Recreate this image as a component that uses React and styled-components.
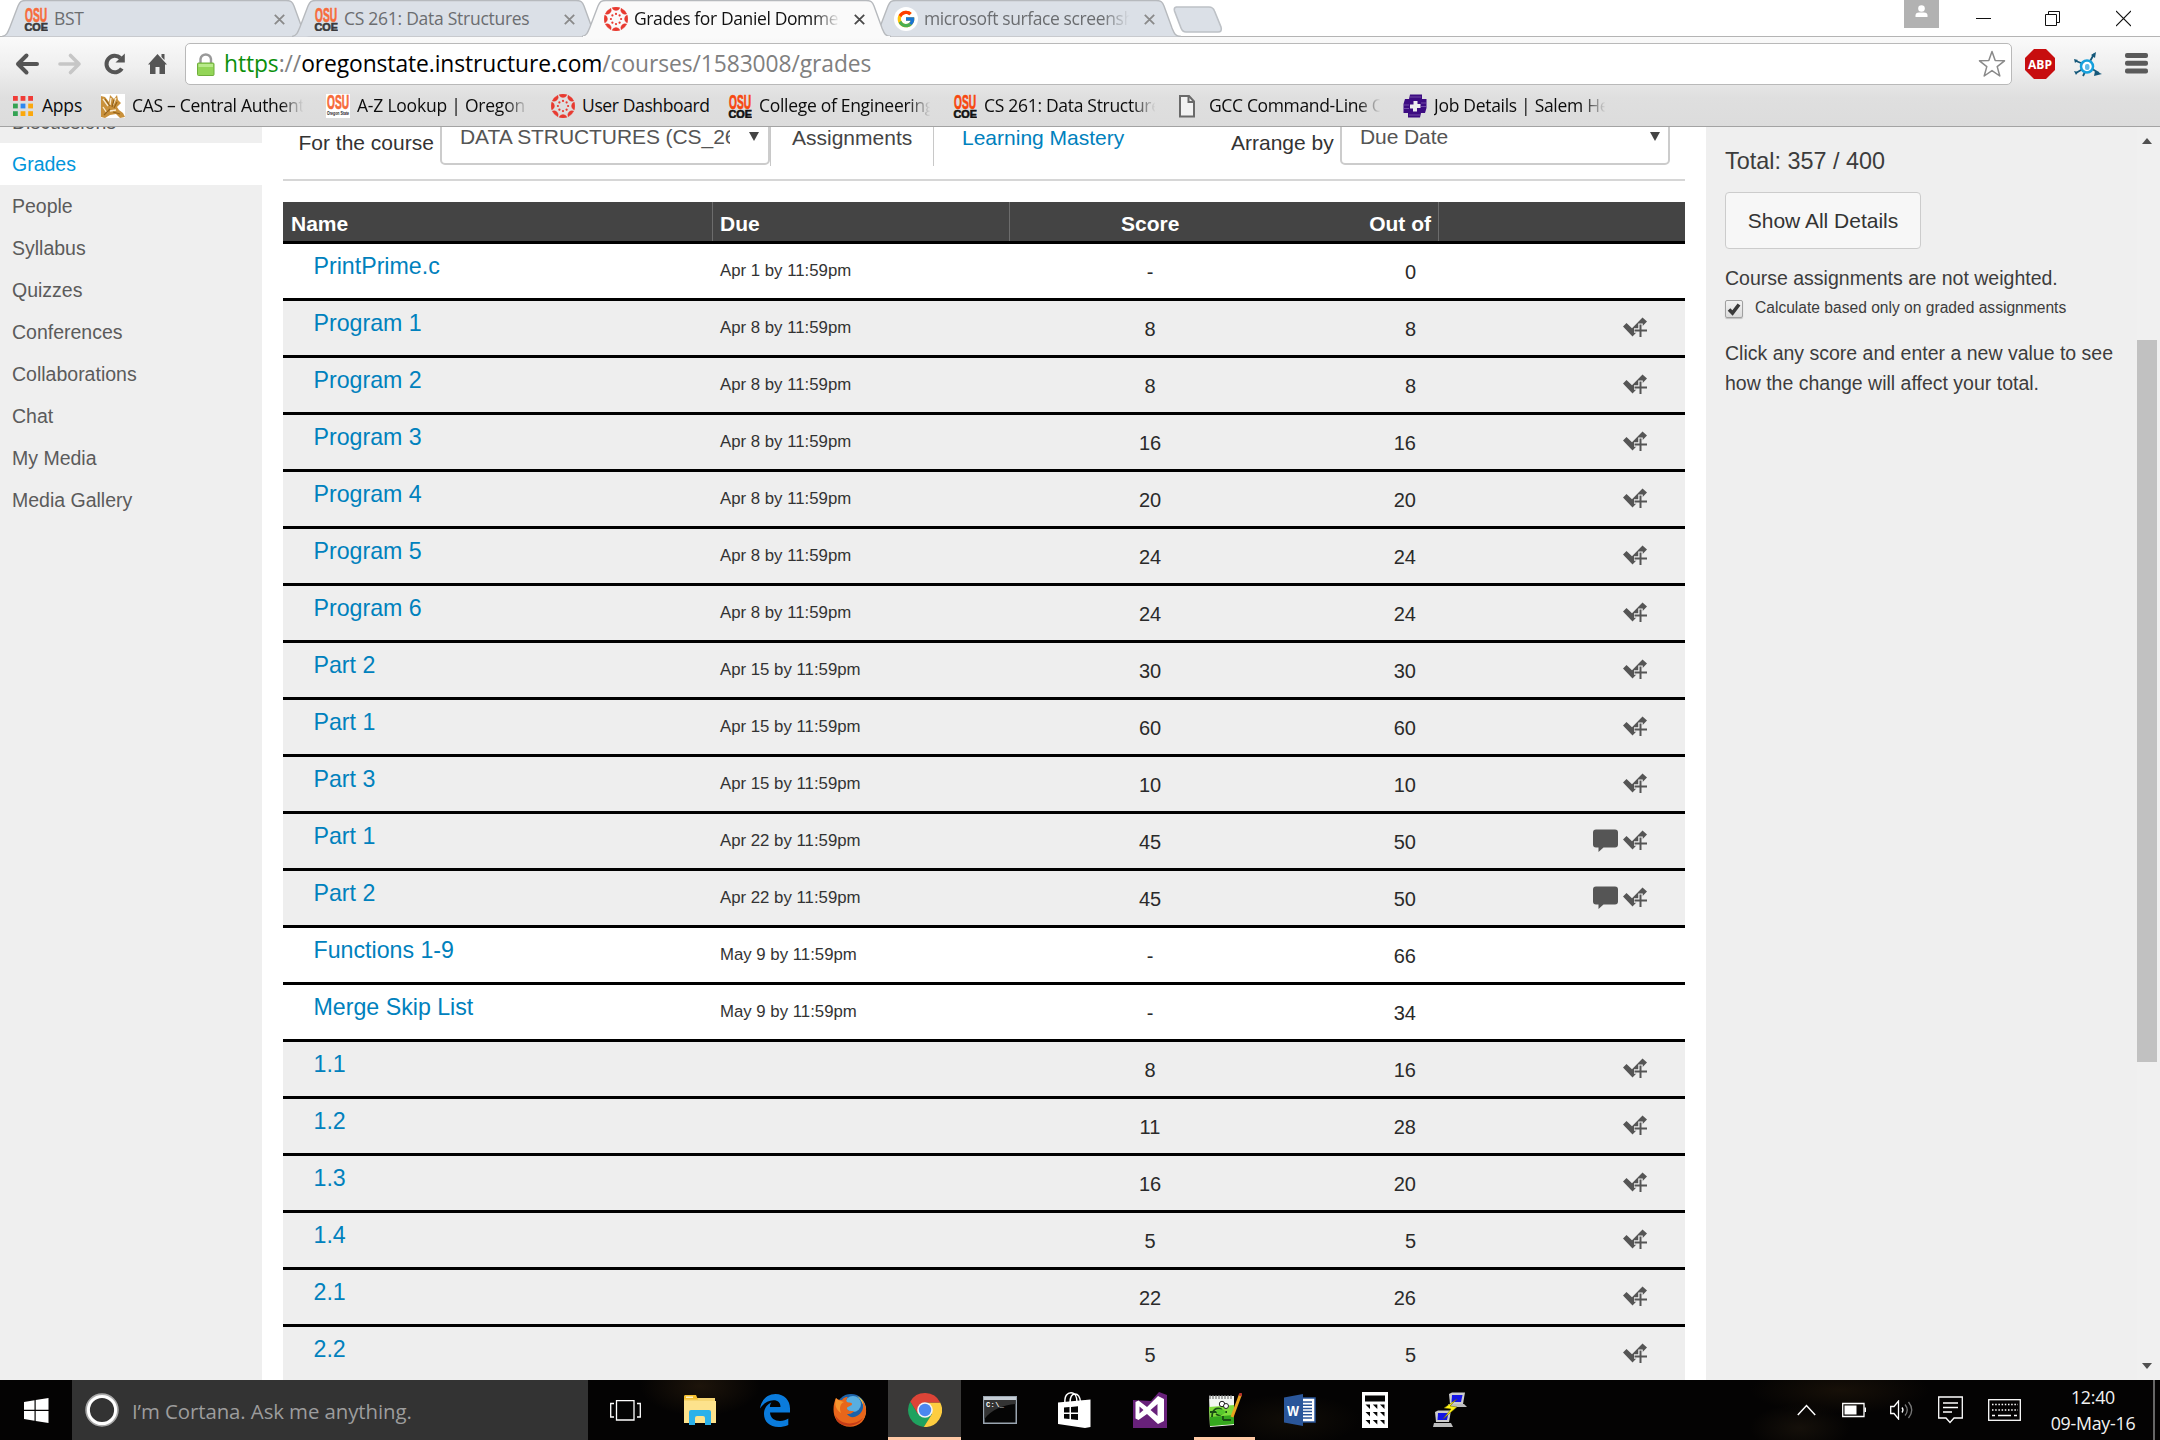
import React from "react";
import styled, { createGlobalStyle, css } from "styled-components";
import { FcGoogle } from "react-icons/fc";

const ui = `"Open Sans", "Noto Sans", sans-serif`;
const web = `"Liberation Sans", Arial, sans-serif`;

const Global = createGlobalStyle`
  * { box-sizing: border-box; }
  html, body { margin: 0; padding: 0; }
  body { width: 2160px; height: 1440px; overflow: hidden; background: #fff; font-family: ${web}; }
  svg { display: block; flex: none; }
`;

const Screen = styled.div`
  width: 2160px;
  height: 1440px;
  display: flex;
  flex-direction: column;
  overflow: hidden;
`;

/* ---------- browser window ---------- */
const TabStrip = styled.div`
  height: 36px;
  flex: none;
  display: flex;
  justify-content: space-between;
  background: #fff;
  font-family: ${ui};
`;
const Tabs = styled.div`
  display: flex;
  padding-left: 2px;
`;
const TabBox = styled.div`
  position: relative;
  z-index: ${(p) => (p.$active ? 3 : 1)};
  width: 290px;
  height: 36px;
  display: flex;
  align-items: center;
  padding: 2px 0 0 22px;
  color: ${(p) => (p.$active ? "#111" : "#6b6d70")};
`;
const TabShape = styled.svg`
  position: absolute;
  left: 0;
  top: 0;
  z-index: -1;
`;
const TabTitle = styled.span`
  width: 208px;
  margin-left: 6px;
  margin-right: 12px;
  margin-top: -2px;
  overflow: hidden;
  white-space: nowrap;
  font-size: 17.5px;
  line-height: 24px;
  letter-spacing: ${(p) => p.$ls || 0}px;
  ${(p) => p.$fade && css`mask-image: linear-gradient(to right, #000 86%, transparent 99%);`}
`;
const NewTab = styled.svg`
  margin: 6px 0 0 11px;
`;
const WindowControls = styled.div`
  display: flex;
  align-items: flex-start;
`;
const Profile = styled.div`
  width: 35px;
  height: 28px;
  margin-right: 37px;
  background: #b2b2b2;
  display: flex;
  justify-content: center;
  padding-top: 5px;
`;
const ControlIcon = styled.svg`
  margin-top: 10px;
  margin-right: ${(p) => p.$gap}px;
`;

const Chrome = styled.div`
  height: 91px;
  flex: none;
  border-top: 1px solid #b4b4b4;
  border-bottom: 1px solid #a3a3a3;
  background: linear-gradient(#fafafa 0, #efefef 30px, #dfdfdf 60px, #dcdcdc 100%);
  font-family: ${ui};
`;
const Toolbar = styled.div`
  height: 48px;
  margin-top: 0;
  padding: 6px 10px 0 14px;
  display: flex;
  align-items: flex-start;
`;
const NavIcon = styled.svg`
  margin-top: 8px;
  margin-right: ${(p) => p.$gap}px;
`;
const Omnibox = styled.div`
  width: 1827px;
  height: 42px;
  border: 1px solid #b9b9b9;
  border-radius: 5px;
  background: #fff;
  display: flex;
  align-items: center;
  padding: 0 5px 0 8px;
`;
const Url = styled.div`
  flex: 1;
  margin-left: 7px;
  font-size: 22.8px;
  line-height: 36px;
  letter-spacing: ${(p) => p.$ls || 0}px;
  color: #808080;
  white-space: nowrap;
`;
const Secure = styled.span` color: #0b8f0b; `;
const Host = styled.span` color: #000; `;
const Ext = styled.svg`
  margin-left: ${(p) => p.$gap}px;
  margin-top: ${(p) => p.$top}px;
`;

const Bookmarks = styled.div`
  height: 41px;
  padding: 0 0 0 13px;
  display: flex;
  align-items: center;
  gap: 19px;
`;
const Bookmark = styled.div`
  display: flex;
  align-items: center;
  gap: ${(p) => p.$gap || 7}px;
`;
const BookmarkText = styled.span`
  width: ${(p) => p.$w}px;
  margin-top: -2px;
  overflow: hidden;
  white-space: nowrap;
  font-size: 17.5px;
  line-height: 26px;
  letter-spacing: ${(p) => p.$ls || 0}px;
  color: #0c0c0c;
  ${(p) => p.$fade && css`mask-image: linear-gradient(to right, #000 85%, transparent 98%);`}
`;

/* ---------- page ---------- */
const Page = styled.div`
  height: 1253px;
  flex: none;
  display: flex;
  overflow: hidden;
  color: #333;
`;
const CourseNav = styled.nav`
  width: 262px;
  height: 1300px;
  margin-top: -26px;
  background: #efefef;
`;
const NavItem = styled.div`
  height: 42px;
  padding-left: 12px;
  font-size: 19.5px;
  line-height: 42px;
  color: ${(p) => (p.$active ? "#0096db" : "#5b5b5b")};
  background: ${(p) => (p.$active ? "#fff" : "transparent")};
`;
const Main = styled.main`
  width: 1444px;
  padding: 0 21px 0 21px;
`;
const Filters = styled.div`
  height: 54px;
  border-bottom: 2px solid #d6d6d6;
  display: flex;
  align-items: flex-start;
  font-size: 21px;
  line-height: 32px;
  white-space: nowrap;
`;
const FilterLabel = styled.span`
  width: ${(p) => p.$w}px;
  padding-left: ${(p) => p.$pad}px;
  padding-top: 0;
`;
const Select = styled.div`
  width: ${(p) => p.$w}px;
  height: 60px;
  margin-top: -22px;
  padding: 14px 0 0 18px;
  border: 2px solid #ccc;
  border-radius: 5px;
  color: #555;
  display: flex;
`;
const SelectText = styled.span`
  width: ${(p) => p.$w}px;
  overflow: hidden;
  letter-spacing: -0.08px;
`;
const SelectArrow = styled.span`
  width: 0;
  height: 0;
  margin: 11px 0 0 ${(p) => p.$gap}px;
  border: 5px solid transparent;
  border-top: 9px solid #444;
  border-bottom: 0;
`;
const ViewTab = styled.span`
  width: ${(p) => p.$w}px;
  height: 39px;
  padding-left: ${(p) => p.$pad}px;
  line-height: 21px;
  border-left: 1px solid #c8c8c8;
  color: ${(p) => (p.$link ? "#0081bd" : "#444")};
`;

const columns = "430px 297px 429px 246px";
const HeaderRow = styled.div`
  margin-top: 21px;
  height: 42px;
  display: grid;
  grid-template-columns: ${columns};
  background: #444;
  border-bottom: 3px solid #000;
  color: #fff;
  font-size: 21px;
  font-weight: bold;
  line-height: 41px;
`;
const HeadCell = styled.div`
  padding: 1px 7px 0 8px;
  display: ${(p) => (p.$split ? "flex" : "block")};
  justify-content: space-between;
  border-right: ${(p) => (p.$last ? "0" : "1px solid #6c6c6c")};
  height: 39px;
`;
const DueHead = styled.span` margin-left: -1px; `;
const ScoreHead = styled.span` margin-left: 103px; `;
const Row = styled.div`
  height: 57px;
  display: grid;
  grid-template-columns: ${columns};
  border-bottom: 3px solid #000;
  background: ${(p) => (p.$graded ? "#eee" : "#fff")};
`;
const NameCell = styled.div`
  padding-left: 30.5px;
  font-size: 23.2px;
  line-height: 44px;
  color: #0081bd;
`;
const DueCell = styled.div`
  padding-left: 7px;
  font-size: 16.8px;
  line-height: 54px;
  height: 54px;
`;
const ScoreCell = styled.div`
  height: 54px;
  display: flex;
  justify-content: space-between;
  padding: 0 23px 0 0;
  font-size: 20px;
  line-height: 56px;
  color: #2a2a2a;
`;
const Earned = styled.span`
  width: 280px;
  text-align: center;
`;
const IconCell = styled.div`
  display: flex;
  justify-content: flex-end;
  gap: 5px;
  padding: 15px 38px 0 0;
`;

const Aside = styled.aside`
  width: 431px;
  padding: 14px 0 0 19px;
  background: #efefef;
  color: #3c3c3c;
  font-size: 19.5px;
`;
const Total = styled.div`
  font-size: 23.4px;
  line-height: 40px;
`;
const DetailsButton = styled.button`
  display: block;
  width: 196px;
  height: 57px;
  margin: 11px 0 0;
  padding: 0;
  border: 1px solid #ccc;
  border-radius: 4px;
  background: #f7f7f7;
  color: #333;
  font: 21px ${web};
`;
const Para = styled.p`
  margin: ${(p) => p.$top}px 0 0;
  line-height: 30px;
  white-space: nowrap;
`;
const CheckRow = styled.div`
  display: flex;
  align-items: center;
  height: 26px;
  margin-top: 2px;
  font-size: 15.6px;
  white-space: nowrap;
`;
const CheckBox = styled.span`
  width: 18px;
  height: 18px;
  margin: 2px 12px 0 0;
  border: 1px solid #a0a0a0;
  border-radius: 2px;
  background: linear-gradient(#f2f2f2, #dcdcdc);
  box-shadow: 0 1px 1px rgba(0, 0, 0, 0.2);
`;
const ScrollBar = styled.div`
  width: 23px;
  background: #f0f0f0;
  display: flex;
  flex-direction: column;
  align-items: flex-start;
  padding: 11px 0;
`;
const ScrollArrow = styled.svg`
  margin-left: ${(p) => p.$x}px;
  margin-top: ${(p) => p.$top}px;
`;
const ScrollThumb = styled.div`
  width: 20px;
  height: 722px;
  margin-top: 196px;
  background: #c1c1c1;
`;

/* ---------- taskbar ---------- */
const Taskbar = styled.div`
  height: 60px;
  flex: none;
  display: flex;
  background:
    radial-gradient(ellipse 60px 30px at 700px 6px, #1d140a, transparent),
    radial-gradient(ellipse 90px 24px at 1840px 10px, #171008, transparent),
    radial-gradient(ellipse 70px 26px at 1290px 40px, #110d07, transparent),
    radial-gradient(ellipse 50px 24px at 1800px 48px, #15100a, transparent),
    #040303;
  font-family: ${ui};
`;
const StartButton = styled.div`
  width: 72px;
  display: flex;
  align-items: center;
  padding-left: 24px;
`;
const Cortana = styled.div`
  width: 516px;
  background: #333;
  display: flex;
  align-items: center;
  padding-left: 13px;
  color: #9d9d9d;
  font-size: 20.4px;
  letter-spacing: ${(p) => p.$ls}px;
`;
const CortanaText = styled.span`
  margin-left: 13px;
  padding-top: 1px;
`;
const TaskView = styled.div`
  width: 74px;
  display: flex;
  align-items: center;
  justify-content: center;
`;
const Apps = styled.div`
  display: flex;
`;
const AppSlot = styled.div`
  width: 75px;
  display: flex;
  justify-content: center;
`;
const AppButton = styled.div`
  width: ${(p) => (p.$active ? 73 : 61)}px;
  height: 60px;
  display: flex;
  align-items: center;
  justify-content: center;
  padding-top: 3px;
  background: ${(p) => (p.$active ? "#3a3938" : "transparent")};
  border-bottom: 3px solid ${(p) => (p.$running || p.$active ? "#ffc9a5" : "transparent")};
`;
const Tray = styled.div`
  flex: 1;
  display: flex;
  align-items: center;
  justify-content: flex-end;
`;
const TrayIcon = styled.svg`
  margin-right: ${(p) => p.$gap}px;
`;
const Clock = styled.div`
  width: 92px;
  margin-right: 14px;
  text-align: center;
  color: #f2f2f2;
  font-size: 17.8px;
  line-height: 26px;
  letter-spacing: ${(p) => p.$ls}px;
  white-space: nowrap;
`;
const PeekEdge = styled.div`
  width: 7px;
  height: 60px;
  border-left: 2px solid #666;
`;

/* ---------- icons ---------- */
const OsuIcon = ({ dim, variant }) => (
  <svg width="24" height="24" viewBox="0 0 24 24" fontFamily={web} fontWeight="bold">
    {variant === "state" && <rect width="24" height="24" fill="#fff" />}
    <text x="1" y="14.5" fontSize="20" textLength="22" lengthAdjust="spacingAndGlyphs" fill={dim || variant ? "#f76b3a" : "#f8470e"} stroke={dim || variant ? "#f76b3a" : "#f8470e"} strokeWidth="0.7">OSU</text>
    {variant === "state" ? (
      <text x="1" y="21" fontSize="5" textLength="22" lengthAdjust="spacingAndGlyphs" fill="#222">Oregon State</text>
    ) : (
      <text x="0.5" y="23.8" fontSize="11" textLength="23.5" lengthAdjust="spacingAndGlyphs" fill={dim ? "#3a3a3c" : "#111"} stroke={dim ? "#3a3a3c" : "#111"} strokeWidth="0.6">COE</text>
    )}
  </svg>
);

const CanvasIcon = () => (
  <svg width="24" height="24" viewBox="-12 -12 24 24" fill="#e83a30">
    {[0, 45, 90, 135, 180, 225, 270, 315].map((a) => (
      <g key={a} transform={`rotate(${a})`}>
        <path d="M-4 -11.2 A12 12 0 0 1 4 -11.2 A4.300 4.300 0 0 1 -4 -11.2Z" stroke="#e83a30" strokeWidth="0.4" />
        <circle cy="-5.1" r="1.1" />
      </g>
    ))}
  </svg>
);

const GoogleIcon = () => (
  <svg width="24" height="24" viewBox="0 0 24 24">
    <circle cx="12" cy="12" r="12" fill="#fff" />
    <FcGoogle x="2" y="2" width="20" height="20" size={20} />
  </svg>
);

const AppsGrid = () => (
  <svg width="20" height="20" viewBox="0 0 20 20">
    {["#f03c37", "#f03c37", "#f03c37", "#34a353", "#2d87f0", "#fba80d", "#34a353", "#fba80d", "#fba80d"].map((c, i) => (
      <rect key={i} x={(i % 3) * 7.6} y={Math.floor(i / 3) * 7.6} width="4.8" height="4.8" fill={c} />
    ))}
  </svg>
);

const BeaverIcon = () => (
  <svg width="24" height="24" viewBox="0 0 24 24">
    <rect width="24" height="24" fill="#fff" />
    <path d="M0 2 L4 3 L8 8 L9 1 L13 5 L16 1 L17 6 L20 9 L16 13 L18 16 L22 19 L24 23 L19 24 L15 20 L9 21 L4 24 L0 23Z" fill="#c9913c" />
    <path d="M2 5 L7 12 M10 4 L9 11 M15 4 L12 11 M2 13 L6 19 M9 17 L15 16" stroke="#f8ead0" strokeWidth="1.300" fill="none" />
    <path d="M4 5 L9 12 M13 6 L11 13 M3 21 L9 15 M16 8 L13 14 M12 18 L19 20" stroke="#94621a" strokeWidth="1.200" fill="none" />
  </svg>
);

const FileIcon = () => (
  <svg width="18" height="24" viewBox="0 0 18 24" fill="none" stroke="#6a6a6a" strokeWidth="2">
    <path d="M2 2 H11 L16 7.5 V22.5 H2 Z" fill="#f2f2f2" />
    <path d="M10.5 2 V8 H16" />
  </svg>
);

const SalemIcon = () => (
  <svg width="24" height="24" viewBox="0 0 24 24">
    <path d="M7 0.500 H19 V5 H23.500 V14 L22 19 H18 L17 23.500 H5 V19 H0.500 V10 L2 5 H6Z" fill="#3d0c82" />
    <path d="M10.500 7 H14.500 V10 H17.500 V14 H14 V17.500 H10 V14.500 H7 V10.500 H10.500Z" fill="#eee" />
    <path d="M1 11 H6 M1 14.500 H6 M7 3 H18 M6 21 H17 M18 9 H23 M18 12.500 H23" stroke="#8a68b8" strokeWidth="0.700" />
  </svg>
);

const CheckPlus = () => (
  <svg width="24" height="24" viewBox="0 0 24 24">
    <path d="M0 10.5 L3.5 7 L9 12.2 L19.5 1.5 L24 5.5 L9.5 20.5Z" fill="#555" />
    <path d="M17.5 7.5 V21.5 M11 14.6 H24" stroke="#eee" strokeWidth="4.500" />
    <path d="M17.5 8.5 V21 M11.5 14.6 H24" stroke="#555" strokeWidth="2" />
  </svg>
);

const Bubble = () => (
  <svg width="25" height="24" viewBox="0 0 25 24">
    <path d="M3 0.5 H22 A3 3 0 0 1 25 3.5 V15.5 A3 3 0 0 1 22 18.5 H10.5 L5.5 23 V18.5 H3 A3 3 0 0 1 0 15.5 V3.5 A3 3 0 0 1 3 0.5Z" fill="#555" />
  </svg>
);

const CloseX = ({ active }) => (
  <svg width="11" height="11" viewBox="0 0 11 11" stroke={active ? "#4a4a4a" : "#8a8a8a"} strokeWidth="1.8">
    <path d="M0.8 0.8 L10.2 10.2 M10.2 0.8 L0.8 10.2" />
  </svg>
);

const Tab = ({ icon, title, active, fade, ls }) => (
  <TabBox $active={active}>
    <TabShape width="312" height="37" viewBox="0 0 312 37">
      <path
        d="M0 36.5 C5 35.5 6 32 8 27 L16 6 C18 1.5 19 0.5 24 0.5 H284 C289 0.5 290.5 2 292 6 L300 28 C302.5 34 303 36 309 36.5"
        fill={active ? "#fafafa" : "#dbe0e7"}
        stroke="#b6b9bd"
        strokeWidth="1.4"
      />
      {active && <path d="M1 36.8 H308" stroke="#fafafa" strokeWidth="1.6" />}
    </TabShape>
    {icon}
    <TabTitle $fade={fade} $ls={ls}>{title}</TabTitle>
    <CloseX active={active} />
  </TabBox>
);

const FolderApp = () => (
  <svg width="36" height="30" viewBox="0 0 36 30">
    <path d="M2 2 Q2 0 4 0 H13 L15 3 H33 V28 H2Z" fill="#f6d673" />
    <path d="M2 2 Q2 0 4 0 H14 L16 4.5 H2Z" fill="#f5bf2e" />
    <rect x="4" y="1.5" width="7" height="1.5" fill="#fff3c4" />
    <path d="M2 6 H34 V28 H2Z" fill="#fde28c" />
    <path d="M7 30 V17 Q7 15 9 15 H27 Q29 15 29 17 V30 H23 V23 Q23 21 21 21 H15 Q13 21 13 23 V30Z" fill="#2bb1ea" />
  </svg>
);
const EdgeApp = () => (
  <svg width="30" height="33" viewBox="0 0 30 33">
    <path d="M0 14.5 C1.5 5 8 0 15.5 0 C24.5 0 30 6.5 30 14.5 V18.6 H10 C10.3 24.5 15 27 20 27 C23.5 27 26 26 28.3 24.6 V31 C25 32.5 21.8 33 18.5 33 C9.5 33 4 27.5 4 20 C4 14.5 7 10.5 11.5 8.3 C10.5 9.7 10 11 9.9 13 H20.5 C20.5 8.5 18 6.2 13.5 6.2 C8 6.2 3.5 9.3 0 14.5Z" fill="#0a7bdc" />
  </svg>
);
const FirefoxApp = () => (
  <svg width="34" height="34" viewBox="0 0 34 34">
    <circle cx="18" cy="16" r="15" fill="#1d62a8" />
    <circle cx="20" cy="11" r="8" fill="#58aee0" />
    <path d="M24 3 C34 8 35 20 30 27 C33 16 30 8 24 3Z" fill="#fbd44a" />
    <path d="M3 5 C5 7 7 7 9 7 C11 4 13 4 15 4 C13 6 13 8 14 9 C16 10 19 9 19 11 C19 13 15 13 14 15 C14 18 17 18 21 18 C19 21 16 21 14 21 C17 26 25 25 29 18 C31 14 30 10 29 7 C35 14 34 23 29 29 C22 36 10 35 4 28 C-1 21 0 11 3 5Z" fill="#e8661b" />
    <path d="M2 22 C7 31 20 34 30 25 C27 32 12 37 4 28Z" fill="#c63d17" />
    <path d="M3 5 C5 8 9 8 11 9 C7 11 6 15 8 20 C3 17 1 11 3 5Z" fill="#f6952e" />
  </svg>
);
const ChromeApp = () => (
  <svg width="34" height="34" viewBox="-17 -17 34 34">
    <path d="M-14.7 -8.5 A17 17 0 0 0 -1 17 L7 4 L0 0 L-7 4Z" fill="#1fa25f" />
    <path d="M15.2 -7.6 A17 17 0 0 1 -1.2 17 L7 4 L3 -7.6Z" fill="#fdcd40" />
    <path d="M-14.7 -8.5 A17 17 0 0 1 15.2 -7.6 H0 L-7 4Z" fill="#dc4437" />
    <circle r="7.8" fill="#f4f4f4" />
    <circle r="6.2" fill="#4a87f0" />
  </svg>
);
const CmdApp = () => (
  <svg width="34" height="28" viewBox="0 0 34 28">
    <rect x="0.75" y="0.75" width="32.5" height="26.5" fill="#050505" stroke="#9aa5b0" strokeWidth="1.5" />
    <path d="M1.5 4 H32.5 L32.5 8 C20 9 8 14 1.5 23Z" fill="#333" />
    <rect x="1" y="1" width="32" height="3" fill="#c4ccd4" />
    <text x="3" y="11" fontSize="7" fontFamily="Liberation Mono, monospace" fontWeight="bold" fill="#fff" textLength="18">{"C:\\_"}</text>
  </svg>
);
const StoreApp = () => (
  <svg width="33" height="36" viewBox="0 0 33 36">
    <path d="M7 12 C6 3 10 0.8 13 0.8 C17 0.8 19 5 19 10 M12 11 C12 4 14 2 17 2 C20 2 22 5 22.5 10" fill="none" stroke="#fff" strokeWidth="1.5" />
    <path d="M0 10.500 L32.5 7.500 V35 L27 36 L0 32Z" fill="#fff" />
    <path d="M6 15.500 L11.500 15 V20.5 H6Z M13 14.900 L20 14.2 V20.5 H13Z M6 22 H11.500 V27 L6 26.5Z M13 22 H20 V28 L13 27.2Z" fill="#050505" />
  </svg>
);
const VsApp = () => (
  <svg width="34" height="36" viewBox="0 0 34 36">
    <path d="M0 8 L18 9 L26 0 L34 3 V36 H0Z" fill="#68217a" />
    <path d="M2.5 10 L5.5 8.5 L14 15 L25 4 L31 7 V29 L25 32 L14 22 L5.5 28 L2.5 26.5Z M6.5 14.5 V21.5 L10.5 18Z M17.5 18 L24.5 24 V12Z" fill="#fff" fillRule="evenodd" />
  </svg>
);
const NppApp = () => (
  <svg width="34" height="34" viewBox="0 0 34 34">
    <path d="M1 3 L26 3 L26 32 L2 34Z" fill="#f2f5f2" />
    <path d="M1 14 L26 12 V31 L2 33Z" fill="#7fdc3c" />
    <path d="M2 24 L26 22 V31 L2 33Z" fill="#35a81e" />
    <path d="M2 2 V6 M5 2 V6 M8 2 V6 M11 2 V6 M14 2 V6 M17 2 V6 M20 2 V6 M23 2 V6" stroke="#777" strokeWidth="1.2" />
    <path d="M4 24 C4 17 8 14 13 16 C16 20 12 24 8 21 M2 19 H19 M15 27 V23 M15 27 H23" fill="none" stroke="#194d14" strokeWidth="1.8" />
    <path d="M8 18 C11 15 16 16 18 19 C14 23 10 23 8 18Z" fill="#57c92c" />
    <circle cx="14" cy="11" r="2.7" fill="#fff" stroke="#222" />
    <circle cx="18" cy="13" r="2.5" fill="#fff" stroke="#222" />
    <path d="M32.5 1.5 L24 24" stroke="#e9a21d" strokeWidth="3" />
    <path d="M33 0 L32 3" stroke="#b5342b" strokeWidth="3" />
  </svg>
);
const WordApp = () => (
  <svg width="32" height="32" viewBox="0 0 32 32">
    <rect x="15" y="4" width="16" height="24" fill="#fff" stroke="#2a569a" strokeWidth="1.5" />
    <path d="M19 8 H28 M19 11.2 H28 M19 14.4 H28 M19 17.6 H28 M19 20.8 H28 M19 24 H28" stroke="#2a569a" strokeWidth="1.5" />
    <path d="M0 3.5 L19 0 V32 L0 28.5Z" fill="#2a569a" />
    <text x="3" y="21.5" fontSize="15" fontFamily={web} fontWeight="bold" fill="#fff" textLength="12" lengthAdjust="spacingAndGlyphs">W</text>
  </svg>
);
const CalcApp = () => (
  <svg width="26" height="36" viewBox="0 0 26 36">
    <rect width="26" height="36" fill="#fff" />
    <rect x="3" y="3.5" width="20" height="6" fill="#050505" />
    {[12.5, 20, 28].map((y) => [3.5, 10.8, 18].map((x) => (
      <path key={x + "-" + y} d={`M${x} ${y} h4.5 v4.5z`} fill="#050505" />
    )))}
  </svg>
);
const PuttyApp = () => (
  <svg width="34" height="36" viewBox="0 0 34 36">
    <path d="M16 2 L19 0.5 H32 L30 12 H17Z" fill="#ccc" />
    <path d="M19 3 H29.5 L28 10 H18.5Z" fill="#1414e6" />
    <path d="M15 12 H31 L34 15 H16Z" fill="#bdbdbd" />
    <path d="M2 20 L5 18.5 H18 L16 30 H3Z" fill="#ccc" />
    <path d="M5 21 H15.5 L14 28 H4.5Z" fill="#1414e6" />
    <path d="M1 31 H18 L20 35 H0Z" fill="#bdbdbd" />
    <path d="M24 7 L11 16 L18 17 L10 27 L24 15 L17 14Z" fill="#fdf114" stroke="#5c5600" strokeWidth="0.5" />
  </svg>
);

const apps = [
  { id: "explorer", icon: <FolderApp /> },
  { id: "edge", icon: <EdgeApp /> },
  { id: "firefox", icon: <FirefoxApp /> },
  { id: "chrome", icon: <ChromeApp />, active: true },
  { id: "cmd", icon: <CmdApp /> },
  { id: "store", icon: <StoreApp /> },
  { id: "vs", icon: <VsApp /> },
  { id: "npp", icon: <NppApp />, running: true },
  { id: "word", icon: <WordApp /> },
  { id: "calc", icon: <CalcApp /> },
  { id: "putty", icon: <PuttyApp /> },
];

const navItems = ["Discussions", "Grades", "People", "Syllabus", "Quizzes", "Conferences", "Collaborations", "Chat", "My Media", "Media Gallery"];

const grades = [
  ["PrintPrime.c", "Apr 1 by 11:59pm", "-", "0"],
  ["Program 1", "Apr 8 by 11:59pm", "8", "8"],
  ["Program 2", "Apr 8 by 11:59pm", "8", "8"],
  ["Program 3", "Apr 8 by 11:59pm", "16", "16"],
  ["Program 4", "Apr 8 by 11:59pm", "20", "20"],
  ["Program 5", "Apr 8 by 11:59pm", "24", "24"],
  ["Program 6", "Apr 8 by 11:59pm", "24", "24"],
  ["Part 2", "Apr 15 by 11:59pm", "30", "30"],
  ["Part 1", "Apr 15 by 11:59pm", "60", "60"],
  ["Part 3", "Apr 15 by 11:59pm", "10", "10"],
  ["Part 1", "Apr 22 by 11:59pm", "45", "50", true],
  ["Part 2", "Apr 22 by 11:59pm", "45", "50", true],
  ["Functions 1-9", "May 9 by 11:59pm", "-", "66"],
  ["Merge Skip List", "May 9 by 11:59pm", "-", "34"],
  ["1.1", "", "8", "16"],
  ["1.2", "", "11", "28"],
  ["1.3", "", "16", "20"],
  ["1.4", "", "5", "5"],
  ["2.1", "", "22", "26"],
  ["2.2", "", "5", "5"],
];

export default function App() {
  return (
    <Screen>
      <Global />
      <TabStrip>
        <Tabs>
          <Tab icon={<OsuIcon dim />} title="BST" ls={-0.27} />
          <Tab icon={<OsuIcon dim />} title="CS 261: Data Structures" ls={-0.27} />
          <Tab icon={<CanvasIcon />} title="Grades for Daniel Dommer" active fade ls={-0.38} />
          <Tab icon={<GoogleIcon />} title="microsoft surface screenshot" fade ls={-0.4} />
          <NewTab width="50" height="27" viewBox="0 0 50 27">
            <path d="M3 1 H36 Q40 1 41.5 5 L48 21 Q49.5 26 45 26 H13 Q9.500 26 8 22 L1.500 5 Q0.500 1 4 1Z" fill="#dbe0e7" stroke="#bdc1c6" strokeWidth="1.6" />
          </NewTab>
        </Tabs>
        <WindowControls>
          <Profile>
            <svg width="13" height="13" viewBox="0 0 13 13" fill="#fff">
              <circle cx="6.500" cy="3.500" r="3.300" />
              <path d="M0.500 12 V10.500 Q0.500 7.500 4 7.500 H9 Q12.500 7.500 12.500 10.500 V12Z" />
            </svg>
          </Profile>
          <ControlIcon $gap={54} width="15" height="17" viewBox="0 0 15 17"><path d="M0 8.500 H15" stroke="#111" /></ControlIcon>
          <ControlIcon $gap={56} width="15" height="17" viewBox="0 0 15 17" fill="none" stroke="#111"><path d="M0.500 4.500 H11.500 V15.500 H0.500Z M3.500 4.500 V1.500 H14.500 V12.500 H11.500" /></ControlIcon>
          <ControlIcon $gap={29} width="15" height="17" viewBox="0 0 15 17" stroke="#111" strokeWidth="1.100"><path d="M0 1 L15 16 M15 1 L0 16" /></ControlIcon>
        </WindowControls>
      </TabStrip>

      <Chrome>
        <Toolbar>
          <NavIcon $gap={18} width="25" height="26" viewBox="0 0 25 26" fill="none" stroke="#555" strokeWidth="4" strokeLinecap="round" strokeLinejoin="round">
            <path d="M4 13 H23 M12.500 4.500 L4 13 L12.500 21.500" />
          </NavIcon>
          <NavIcon $gap={22} width="25" height="26" viewBox="0 0 25 26" fill="none" stroke="#c6c6c6" strokeWidth="3.600" strokeLinecap="round" strokeLinejoin="round">
            <path d="M3 13 H22 M13.500 4.500 L22 13 L13.500 21.500" />
          </NavIcon>
          <NavIcon $gap={22} width="22" height="26" viewBox="0 0 22 26" fill="none">
            <path d="M17.800 17.500 A8.300 8.300 0 1 1 16.500 7" stroke="#555" strokeWidth="4" />
            <path d="M20.800 2.500 V11.500 H11.500Z" fill="#555" />
          </NavIcon>
          <NavIcon $gap={18} width="19" height="26" viewBox="0 0 19 26" fill="#555">
            <path d="M9.500 3 L19 13.500 H17 V23 H11.500 V16 H7.500 V23 H2 V13.500 H0Z M13.500 3 H16.500 V9 L13.500 6Z" />
          </NavIcon>
          <Omnibox>
            <svg width="23" height="26" viewBox="0 0 23 26">
              <path d="M6.500 13 V8 A5.300 5.300 0 0 1 17 8 V13" fill="none" stroke="#999" strokeWidth="2.400" />
              <rect x="3.500" y="12" width="16.500" height="12.500" rx="1" fill="#93d557" stroke="#6fae3c" />
              <rect x="4.500" y="13" width="14.500" height="3" fill="#b9ea8b" />
            </svg>
            <Url $ls={-0.08}><Secure>https</Secure>://<Host>oregonstate.instructure.com</Host>/courses/1583008/grades</Url>
            <svg width="28" height="28" viewBox="0 0 28 28">
              <path d="M14 1.500 L17.200 10.500 L26.500 10.800 L19.200 16.600 L21.800 26 L14 20.600 L6.200 26 L8.800 16.600 L1.500 10.800 L10.800 10.500Z" fill="none" stroke="#8a8a8a" strokeWidth="1.500" strokeLinejoin="round" />
            </svg>
          </Omnibox>
          <Ext $gap={13} $top={6} width="30" height="30" viewBox="0 0 30 30">
            <path d="M9 0 H21 L30 9 V21 L21 30 H9 L0 21 V9Z" fill="#c70d0f" />
            <text x="3" y="19.500" fontSize="12.500" fontFamily={ui} fontWeight="bold" fill="#fff" textLength="24" lengthAdjust="spacingAndGlyphs">ABP</text>
          </Ext>
          <Ext $gap={19} $top={9} width="28" height="26" viewBox="0 0 28 26">
            <path d="M2 9 L12 13 M20 2 L14 13 M2 21 L12 15 M9 24 L13 16 M13 14 L25 21" stroke="#15587a" strokeWidth="1.800" />
            <circle cx="13" cy="14.500" r="6" fill="#fff" stroke="#16a0dc" strokeWidth="2.500" />
            <path d="M17 3 L22 0 L21 6Z M21 19 L28 22 L20 24Z M0 7 L4 8 L1 11Z M0 19 L4 20 L2 23Z" fill="#15587a" />
            <rect x="11" y="12" width="4.500" height="6" rx="2" fill="#5fb9e8" />
          </Ext>
          <Ext $gap={23} $top={10} width="23" height="21" viewBox="0 0 23 21" fill="#5a5a5a">
            <rect width="23" height="5" rx="2" />
            <rect y="7.800" width="23" height="5" rx="2" />
            <rect y="15.400" width="23" height="5" rx="2" />
          </Ext>
        </Toolbar>
        <Bookmarks>
          <Bookmark $gap={9}><AppsGrid /><BookmarkText $w={40} $ls={-0.2}>Apps</BookmarkText></Bookmark>
          <Bookmark><BeaverIcon /><BookmarkText $w={175} $fade $ls={-0.3}>CAS – Central Authentication</BookmarkText></Bookmark>
          <Bookmark><OsuIcon variant="state" /><BookmarkText $w={175} $fade $ls={-0.22}>A-Z Lookup | Oregon State</BookmarkText></Bookmark>
          <Bookmark><CanvasIcon /><BookmarkText $w={127} $ls={-0.38}>User Dashboard</BookmarkText></Bookmark>
          <Bookmark><OsuIcon /><BookmarkText $w={175} $fade $ls={-0.3}>College of Engineering</BookmarkText></Bookmark>
          <Bookmark><OsuIcon /><BookmarkText $w={175} $fade $ls={-0.3}>CS 261: Data Structures</BookmarkText></Bookmark>
          <Bookmark $gap={13}><FileIcon /><BookmarkText $w={175} $fade $ls={-0.35}>GCC Command-Line Options</BookmarkText></Bookmark>
          <Bookmark><SalemIcon /><BookmarkText $w={175} $fade $ls={-0.3}>Job Details | Salem Health</BookmarkText></Bookmark>
        </Bookmarks>
      </Chrome>

      <Page>
        <CourseNav>
          {navItems.map((n) => <NavItem key={n} $active={n === "Grades"}>{n}</NavItem>)}
        </CourseNav>
        <Main>
          <Filters>
            <FilterLabel $w={157} $pad={15.5}>For the course</FilterLabel>
            <Select $w={330}>
              <SelectText $w={270}>DATA STRUCTURES (CS_261)</SelectText>
              <SelectArrow $gap={19} />
            </Select>
            <ViewTab $w={163} $pad={21}>Assignments</ViewTab>
            <ViewTab $w={298} $pad={28} $link>Learning Mastery</ViewTab>
            <FilterLabel $w={109} $pad={0}>Arrange by</FilterLabel>
            <Select $w={330}>
              <SelectText $w={290}>Due Date</SelectText>
              <SelectArrow $gap={0} />
            </Select>
          </Filters>
          <HeaderRow>
            <HeadCell>Name</HeadCell>
            <HeadCell><DueHead>Due</DueHead></HeadCell>
            <HeadCell $split><ScoreHead>Score</ScoreHead><span>Out of</span></HeadCell>
            <HeadCell $last />
          </HeaderRow>
          {grades.map(([name, due, score, outOf, comment], i) => (
            <Row key={i} $graded={score !== "-"}>
              <NameCell>{name}</NameCell>
              <DueCell>{due}</DueCell>
              <ScoreCell><Earned>{score}</Earned><span>{outOf}</span></ScoreCell>
              <IconCell>
                {comment && <Bubble />}
                {score !== "-" && <CheckPlus />}
              </IconCell>
            </Row>
          ))}
        </Main>
        <Aside>
          <Total>Total: 357 / 400</Total>
          <DetailsButton>Show All Details</DetailsButton>
          <Para $top={14}>Course assignments are not weighted.</Para>
          <CheckRow>
            <CheckBox>
              <svg width="16" height="16" viewBox="0 0 16 16"><path d="M3 8.500 L6.500 12 L13 3.500" fill="none" stroke="#3a3a3a" strokeWidth="3.600" /></svg>
            </CheckBox>
            Calculate based only on graded assignments
          </CheckRow>
          <Para $top={17}>Click any score and enter a new value to see<br />how the change will affect your total.</Para>
        </Aside>
        <ScrollBar>
          <ScrollArrow $x={5} $top={0} width="10" height="6" viewBox="0 0 10 6"><path d="M0 6 L5 0 L10 6Z" fill="#505050" /></ScrollArrow>
          <ScrollThumb />
          <ScrollArrow $x={5} $top={301} width="10" height="6" viewBox="0 0 10 6"><path d="M0 0 H10 L5 6Z" fill="#505050" /></ScrollArrow>
        </ScrollBar>
      </Page>

      <Taskbar>
        <StartButton>
          <svg width="25" height="25" viewBox="0 0 25 25" fill="#fff">
            <path d="M0 4 L10.500 2.200 V11.800 H0Z M11.700 2 L24.500 0 V11.800 H11.700Z M0 13 H10.500 V22.700 L0 21Z M11.700 13 H24.500 V25 L11.700 23Z" />
          </svg>
        </StartButton>
        <Cortana $ls={-0.08}>
          <svg width="34" height="34" viewBox="0 0 34 34" fill="none">
            <circle cx="17" cy="17" r="15.500" stroke="#a9a9a9" strokeWidth="2.500" />
            <circle cx="17" cy="17" r="13.600" stroke="#fff" strokeWidth="3" />
          </svg>
          <CortanaText>I’m Cortana. Ask me anything.</CortanaText>
        </Cortana>
        <TaskView>
          <svg width="31" height="21" viewBox="0 0 31 21" fill="none" stroke="#fff" strokeWidth="1.300">
            <path d="M6.500 0.700 H24 V20 H6.500Z M4 3.500 H0.700 V17 H4 M27 3.500 H30.300 V17 H27" />
          </svg>
        </TaskView>
        <Apps>
          {apps.map((a) => (
            <AppSlot key={a.id}><AppButton $active={a.active} $running={a.running}>{a.icon}</AppButton></AppSlot>
          ))}
        </Apps>
        <Tray>
          <TrayIcon $gap={26} width="19" height="12" viewBox="0 0 19 12" fill="none" stroke="#fff" strokeWidth="1.500"><path d="M0.800 11 L9.500 1.500 L18.200 11" /></TrayIcon>
          <TrayIcon $gap={24} width="24" height="16" viewBox="0 0 24 16"><path d="M0.700 1.500 H22 V14.500 H0.700Z" fill="none" stroke="#fff" strokeWidth="1.300" /><path d="M2.500 3.500 H14.500 V12.500 H2.500Z M22.500 5.500 H24 V10 H22.500Z" fill="#fff" /></TrayIcon>
          <TrayIcon $gap={24} width="24" height="20" viewBox="0 0 24 20" fill="none" strokeWidth="1.300"><path d="M0.700 6.500 H4 L8.500 1 V19 L4 13.500 H0.700Z" stroke="#fff" /><path d="M12 7.500 Q14 10 12 12.500" stroke="#fff" /><path d="M15 4.500 Q19.500 10 15 15.500 M18.500 2 Q25 10 18.500 18" stroke="#777" /></TrayIcon>
          <TrayIcon $gap={25} width="25" height="28" viewBox="0 0 25 28" fill="none" stroke="#fff" strokeWidth="1.300"><path d="M0.700 1 H24.300 V22 H16 L12 26.500 L8 22 H0.700Z M5 7 H20 M5 11.500 H20 M5 16 H14" /></TrayIcon>
          <TrayIcon $gap={26} width="33" height="22" viewBox="0 0 33 22" fill="none" stroke="#fff" strokeWidth="1.300"><rect x="0.700" y="0.700" width="31.600" height="20.600" /><path d="M4 5.500 H30 M4 11 H30" strokeDasharray="1.500 1.700" /><path d="M4 16.500 H7 M10 16.500 H23 M26 16.500 H29" /></TrayIcon>
          <Clock $ls={-0.25}>12:40<br />09-May-16</Clock>
          <PeekEdge />
        </Tray>
      </Taskbar>
    </Screen>
  );
}
